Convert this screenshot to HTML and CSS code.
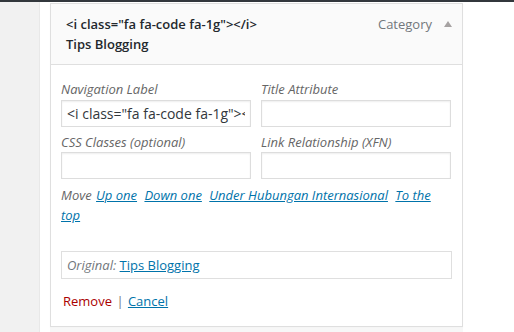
FILE: index.html
```html
<!DOCTYPE html>
<html lang="en">
<head>
    <meta charset="UTF-8">
    <meta name="viewport" content="width=device-width, initial-scale=1.0">
    <title>Menu Item</title>
    <link rel="stylesheet" href="styles.css">
</head>
<body>
    <div class="topbar"></div>
    <div class="page">
        <div class="side"></div>
        <div class="content">
            <div class="menu-item">
                <div class="item-bar">
                    <span class="item-title">&lt;i class="fa fa-code fa-1g"&gt;&lt;/i&gt; Tips Blogging</span>
                    <span class="item-controls">
                        <span class="item-type">Category</span>
                        <span class="item-arrow"></span>
                    </span>
                </div>

                <div class="item-settings">
                    <div class="fields">
                        <label class="field">
                            <span class="field-label">Navigation Label</span>
                            <input type="text" value='&lt;i class="fa fa-code fa-1g"&gt;&lt;/i&gt;'>
                        </label>
                        <label class="field">
                            <span class="field-label">Title Attribute</span>
                            <input type="text">
                        </label>
                        <label class="field">
                            <span class="field-label">CSS Classes (optional)</span>
                            <input type="text">
                        </label>
                        <label class="field">
                            <span class="field-label">Link Relationship (XFN)</span>
                            <input type="text">
                        </label>
                    </div>

                    <p class="field-move">
                        Move <a href="#">Up one</a> <a href="#">Down one</a> <a href="#">Under Hubungan Internasional</a> <a href="#">To the top</a>
                    </p>

                    <div class="link-original">
                        <span class="original-label">Original:</span>
                        <a href="#">Tips Blogging</a>
                    </div>

                    <div class="item-actions">
                        <a href="#" class="item-delete">Remove</a>
                        <span class="sep">|</span>
                        <a href="#" class="item-cancel">Cancel</a>
                    </div>
                </div>
            </div>
            <div class="next-item"></div>
        </div>
    </div>
</body>
</html>
```

FILE: styles.css
```css
body {
    margin: 0;
    font-family: "Open Sans", Arial, sans-serif;
    font-size: 13px;
    color: #444;
    background-color: #fff;
    height: 332px;
    overflow: hidden;
}
.topbar {
    height: 2px;
    background-color: #32373c;
}
.page {
    display: flex;
    height: 330px;
}
.side {
    width: 39px;
    background-color: #f1f1f1;
    border-right: 1px solid #e8e8e8;
}
.content {
    padding: 1px 0 0 10px;
}
.menu-item {
    width: 413px;
    box-shadow: 0 1px 1px rgba(0, 0, 0, 0.04);
}
.item-bar {
    display: flex;
    justify-content: space-between;
    padding: 10px 10px 10px 15px;
    border: 1px solid #dfdfdf;
    background-color: #fafafa;
    line-height: 20px;
}
.item-title {
    width: 215px;
    font-weight: 600;
    color: #23282d;
}
.item-controls {
    display: flex;
    align-items: flex-start;
}
.item-type {
    color: #72777c;
    margin-right: 12px;
}
.item-arrow {
    width: 0;
    height: 0;
    margin-top: 7px;
    border-left: 4.5px solid transparent;
    border-right: 4.5px solid transparent;
    border-bottom: 6px solid #a6a2a2;
}
.item-settings {
    padding: 15px 10px 15px 10px;
    border: 1px solid #dfdfdf;
    border-top: none;
    line-height: 19.5px;
}
.fields {
    display: grid;
    grid-template-columns: 190px 190px;
    column-gap: 10px;
    row-gap: 6px;
}
.field {
    display: flex;
    flex-direction: column;
}
.field-label {
    font-style: italic;
    color: #666;
}
.field input {
    box-sizing: border-box;
    width: 190px;
    height: 27px;
    margin: 0;
    padding: 0 5px;
    font-family: "Open Sans", Arial, sans-serif;
    font-size: 14px;
    color: #32373c;
    border: 1px solid #ddd;
    box-shadow: inset 0 1px 2px rgba(0, 0, 0, 0.07);
    outline: none;
}
.field-move {
    margin: 6px 0 0 0;
    font-style: italic;
    color: #666;
    line-height: 20px;
}
.field-move a {
    margin: 0 2px;
    color: #0073aa;
}
.field-move a:first-child {
    margin-left: 1px;
}
.link-original {
    margin-top: 26px;
    padding: 3px 5px;
    border: 1px solid #dfdfdf;
    line-height: 20px;
}
.original-label {
    font-style: italic;
    color: #72777c;
}
.link-original a {
    color: #0073aa;
}
.item-actions {
    margin-top: 12px;
    padding-left: 2px;
    line-height: 20px;
}
.item-delete {
    color: #a00;
    text-decoration: none;
}
.sep {
    color: #72777c;
    margin: 0 1px 0 1px;
}
.item-cancel {
    color: #0073aa;
}
.next-item {
    width: 413px;
    height: 8px;
    margin-top: 1px;
    background-color: #f7f7f7;
}
```
